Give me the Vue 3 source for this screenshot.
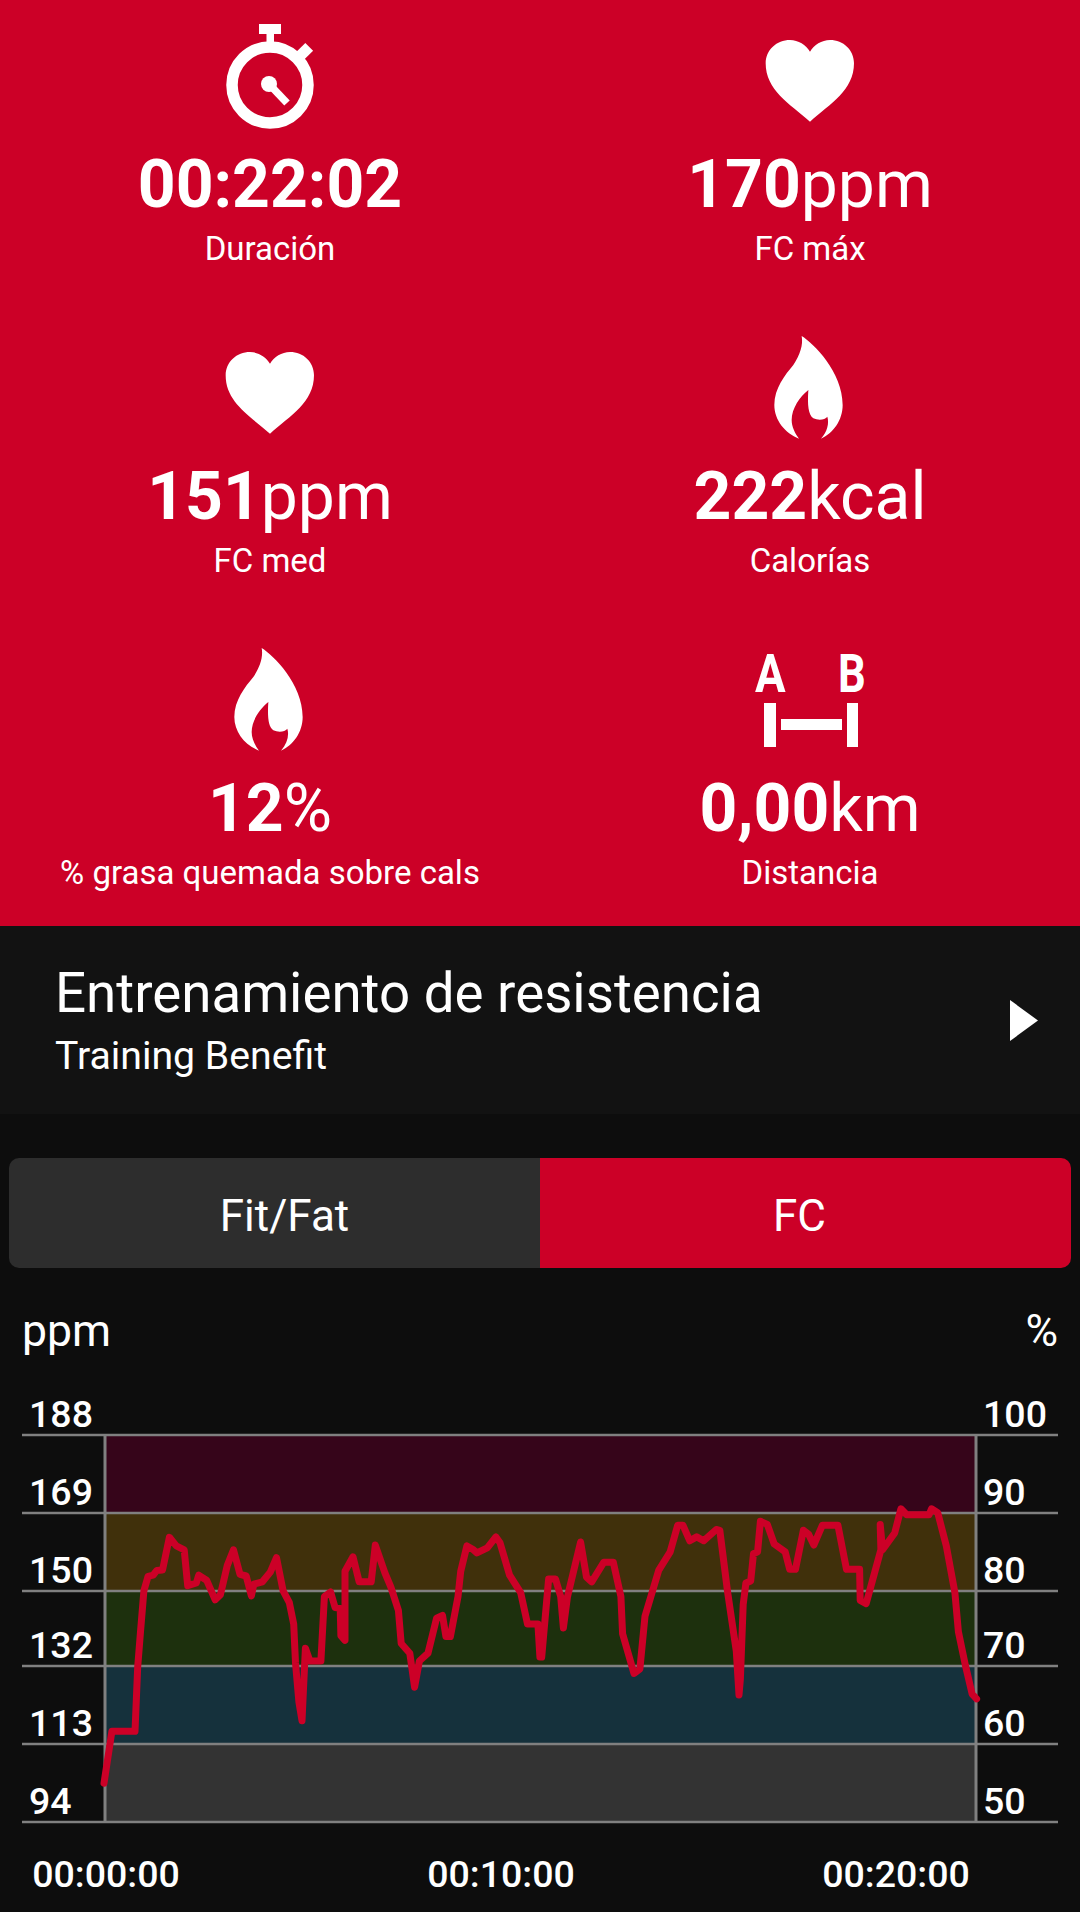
<script setup>
const cells = [
  { icon: 'watch', num: '00:22:02', unit: '', label: 'Duración' },
  { icon: 'heart', num: '170', unit: 'ppm', label: 'FC máx' },
  { icon: 'heart', num: '151', unit: 'ppm', label: 'FC med' },
  { icon: 'flame', num: '222', unit: 'kcal', label: 'Calorías' },
  { icon: 'flame', num: '12', unit: '%', label: '% grasa quemada sobre cals' },
  { icon: 'ab', num: '0,00', unit: 'km', label: 'Distancia' }
]
const gridY = [1435, 1513, 1591, 1666, 1744, 1822]
const bandColors = ['#36051a', '#40300b', '#1d300d', '#15313c', '#333333']
const bands = bandColors.map((c, i) => ({ c, y: gridY[i], h: gridY[i + 1] - gridY[i] }))
const leftLabels = ['188', '169', '150', '132', '113', '94']
const rightLabels = ['100', '90', '80', '70', '60', '50']
const labelY = [1427, 1505, 1583, 1658, 1736, 1814]
const times = [{ t: '00:00:00', x: 106 }, { t: '00:10:00', x: 501 }, { t: '00:20:00', x: 896 }]

const left = [[302,1238],[325,1105],[392,1105],[400,940],[408,850],[418,745],[430,708],[445,705],[455,693],[472,692],[492,608],[512,630],[535,640],[545,732],[570,725],[577,705],[600,718],[625,768],[640,755],[660,680],[678,640],[697,703],[715,707],[730,758],[737,728],[762,722],[785,697],[803,660],[822,745],[840,775],[853,830],[858,930],[868,1030],[877,1078],[887,892],[900,925],[932,925],[942,760],[960,748],[973,788],[988,790],[990,860],[1002,872],[1002,695],[1025,658],[1043,722],[1078,722],[1090,628],[1118,700],[1135,735],[1157,795],[1165,880],[1190,905],[1204,992],[1218,925],[1243,905],[1268,815],[1285,808],[1295,862],[1308,862],[1330,760],[1338,695],[1356,630],[1375,640],[1385,648],[1415,635],[1440,607],[1452,622],[1480,705],[1512,750],[1532,830],[1562,830],[1568,915]]
const right = [[5,915],[25,715],[45,715],[60,760],[68,840],[80,760],[118,620],[135,710],[150,722],[185,672],[213,672],[235,760],[240,855],[273,957],[290,945],[305,810],[345,692],[378,645],[400,577],[415,577],[435,617],[455,607],[475,617],[512,588],[522,590],[545,750],[570,900],[578,1012],[582,970],[590,780],[598,725],[612,720],[620,650],[632,645],[640,567],[660,575],[680,625],[712,645],[725,690],[742,690],[765,590],[780,600],[795,628],[820,577],[865,577],[890,690],[928,690],[930,770],[947,778],[990,640],[988,575],[995,640],[1030,597],[1048,535],[1065,550],[1130,550],[1137,535],[1155,545],[1180,630],[1205,750],[1215,850],[1235,935],[1255,1010],[1268,1022]]
const toY = (y) => 1300 + y / 2.562
const line = [
  ...left.map(([x, y]) => `${(x / 2.904).toFixed(1)},${toY(y).toFixed(1)}`),
  ...right.map(([x, y]) => `${(540 + x / 2.904).toFixed(1)},${toY(y).toFixed(1)}`)
].join(' ')
</script>

<template>
  <div class="page">
    <section class="stats">
      <div v-for="c in cells" :key="c.label" class="cell">
        <svg class="icon" viewBox="0 0 120 130" width="120" height="130">
          <g v-if="c.icon === 'watch'" fill="#fff">
            <circle cx="60" cy="71" r="38" fill="none" stroke="#fff" stroke-width="11.5" />
            <rect x="49" y="10" width="22" height="10" />
            <rect x="56.5" y="18" width="7.5" height="16" />
            <rect x="87" y="30" width="11" height="19" transform="rotate(45 92.5 39.5)" />
            <circle cx="59" cy="70" r="8" />
            <path d="M59 70 L77 89" stroke="#fff" stroke-width="7.5" />
          </g>
          <path v-else-if="c.icon === 'heart'" fill="#fff" transform="translate(0 11) scale(.3333)" d="M180 290 C118 236 47 195 47 115 C47 75 80 45 120 45 C145 45 168 60 180 80 C192 60 215 45 240 45 C280 45 312 75 312 115 C312 195 242 236 180 290 Z" />
          <g v-else-if="c.icon === 'flame'" transform="translate(0 -1) scale(.3333)">
            <path fill="#fff" d="M155 33 C190 55 278 140 278 240 C278 285 250 325 213 341 C232 320 238 295 232 275 C225 285 205 287 190 280 C175 270 172 240 175 195 C150 215 125 250 125 285 C125 305 135 325 147 341 C105 325 73 285 73 240 C73 190 105 150 130 120 C150 90 160 60 155 33 Z" />
          </g>
          <g v-else fill="#fff">
            <text transform="translate(5 54) scale(.86 1)" class="ab">A</text>
            <text transform="translate(88 54) scale(.82 1)" class="ab">B</text>
            <rect x="14" y="65" width="12" height="44" />
            <rect x="31" y="81" width="61" height="11" />
            <rect x="97" y="65" width="11" height="44" />
          </g>
        </svg>
        <div class="value"><b>{{ c.num }}</b>{{ c.unit }}</div>
        <div class="label">{{ c.label }}</div>
      </div>
    </section>

    <section class="benefit">
      <div>
        <div class="title">Entrenamiento de resistencia</div>
        <div class="sub">Training Benefit</div>
      </div>
      <svg width="28" height="41" viewBox="0 0 28 41"><path d="M0 0 L28 20.5 L0 41 Z" fill="#fff" /></svg>
    </section>

    <section class="lower">
      <div class="tabs">
        <div class="tab first">Fit/Fat</div>
        <div class="tab active">FC</div>
      </div>
      <div class="units"><span>ppm</span><span>%</span></div>
      <svg class="chart" width="1080" height="532" viewBox="0 1380 1080 532">
        <rect v-for="b in bands" :key="b.c" x="105" :y="b.y" width="871" :height="b.h" :fill="b.c" />
        <line v-for="y in gridY" :key="y" x1="22" x2="1058" :y1="y" :y2="y" stroke="#808080" stroke-width="2.5" />
        <line x1="105" x2="105" y1="1435" y2="1822" stroke="#808080" stroke-width="3" />
        <line x1="976" x2="976" y1="1435" y2="1822" stroke="#808080" stroke-width="3" />
        <polyline :points="line" fill="none" stroke="#cc0027" stroke-width="7" stroke-linejoin="round" stroke-linecap="round" />
        <text v-for="(l, i) in leftLabels" :key="l" x="29" :y="labelY[i]" class="axis">{{ l }}</text>
        <text v-for="(l, i) in rightLabels" :key="l" x="983" :y="labelY[i]" class="axis">{{ l }}</text>
        <text v-for="t in times" :key="t.t" :x="t.x" y="1887" text-anchor="middle" class="axis">{{ t.t }}</text>
      </svg>
    </section>
  </div>
</template>

<style scoped>
.page {
  width: 1080px;
  height: 1912px;
  overflow: hidden;
  background: #0d0d0d;
  color: #fff;
  font-family: Roboto, "Liberation Sans", sans-serif;
}
.stats {
  display: grid;
  grid-template-columns: 540px 540px;
  grid-template-rows: 312px 312px 302px;
  background: #cc0027;
}
.cell {
  display: flex;
  flex-direction: column;
  align-items: center;
  padding-top: 14px;
}
.icon {
  display: block;
  flex: none;
}
.ab {
  font-size: 53px;
  font-weight: 700;
  font-family: Roboto, sans-serif;
}
.value {
  margin-top: 6px;
  font-size: 66px;
  line-height: 70px;
  white-space: nowrap;
}
.value b {
  font-weight: 700;
}
.label {
  margin-top: 11px;
  font-size: 33px;
  line-height: 36px;
  white-space: nowrap;
}
.benefit {
  height: 188px;
  box-sizing: border-box;
  padding: 0 42px 0 55px;
  background: #121212;
  display: flex;
  justify-content: space-between;
  align-items: center;
}
.title {
  font-size: 54.7px;
  line-height: 60px;
}
.sub {
  margin-top: 11px;
  font-size: 39.2px;
  line-height: 44px;
}
.lower {
  padding-top: 44px;
}
.tabs {
  display: flex;
  margin: 0 9px;
  height: 110px;
  border-radius: 10px;
  overflow: hidden;
}
.tab {
  flex: 0 0 50%;
  display: flex;
  align-items: center;
  justify-content: center;
  font-size: 44px;
  background: #2d2d2d;
  padding-top: 5px;
  box-sizing: border-box;
}
.tab.first {
  padding-left: 20px;
}
.tab.active {
  background: #cc0027;
  padding-right: 12px;
}
.units {
  display: flex;
  justify-content: space-between;
  padding: 0 22px;
  margin-top: 34px;
  height: 78px;
  font-size: 44.5px;
  line-height: 58px;
}
.chart {
  display: block;
}
.axis {
  fill: #fff;
  font-size: 37.5px;
  font-family: Roboto, sans-serif;
  font-weight: 500;
}
</style>
